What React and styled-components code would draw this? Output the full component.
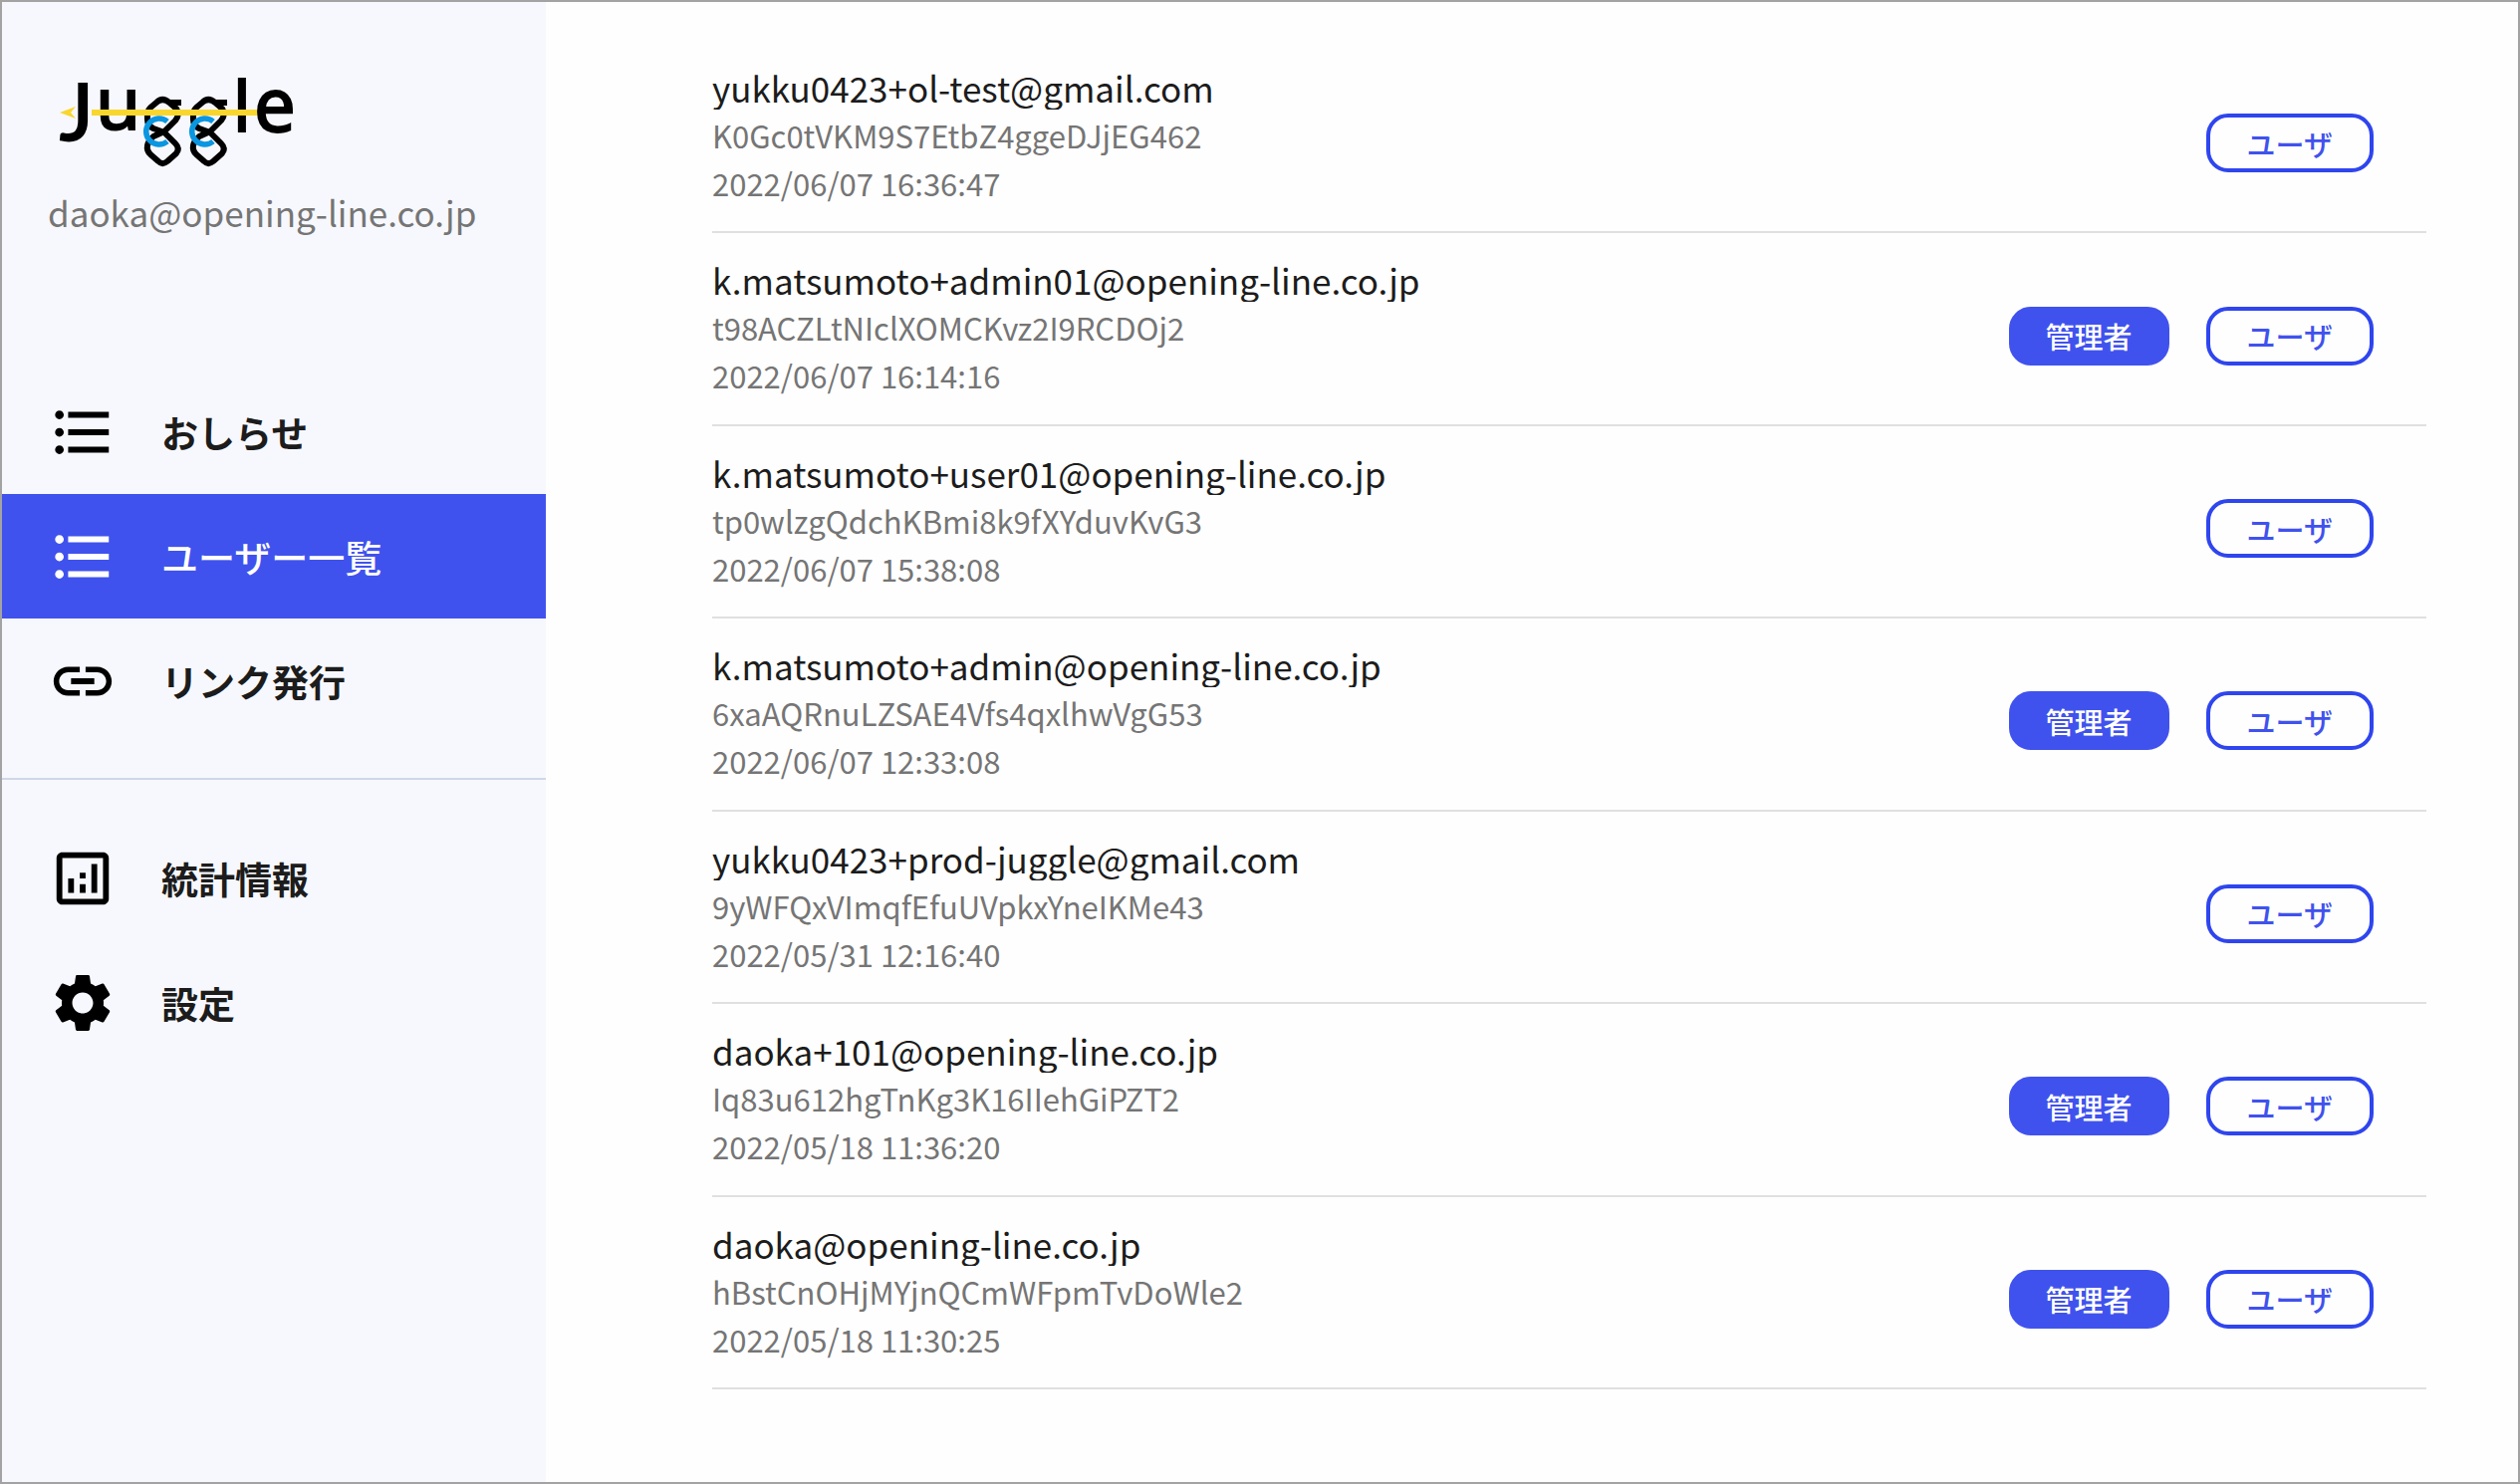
import React from "react";
import styled, { createGlobalStyle } from "styled-components";
import {
  MdFormatListBulleted,
  MdLink,
  MdOutlineAnalytics,
  MdSettings,
} from "react-icons/md";

const GlobalStyle = createGlobalStyle`
  *, *::before, *::after { box-sizing: border-box; }
  body {
    margin: 0;
    background: #fefefe;
    color: #1c1c1c;
    font-family: "Noto Sans CJK JP", "Noto Sans", sans-serif;
  }
`;

const Page = styled.div`
  display: flex;
  min-height: 100vh;
  border: 2px solid #a3a3a3;
`;

const Sidebar = styled.aside`
  flex: 0 0 546px;
  background: #f7f8fd;
`;

const Account = styled.header`
  height: 369px;
  padding: 73px 46px 0;
`;

const Logo = styled.svg`
  display: block;
  width: 252px;
  height: 96px;
  overflow: visible;
`;

const LogoLetter = styled.text`
  font-family: ${(p) => p.$face || "Noto Sans"}, "Open Sans", sans-serif;
  font-size: ${(p) => p.$size}px;
  fill: #000;
  stroke: #000;
  stroke-width: 2px;
`;

const AccountEmail = styled.p`
  margin: 16px 0 0;
  font-size: 35px;
  line-height: 52px;
  color: #757575;
`;

const NavList = styled.ul`
  margin: 0;
  padding: 0;
  list-style: none;
`;

const NavLink = styled.a`
  display: flex;
  align-items: center;
  gap: 44px;
  height: 125px;
  padding: 0 46px;
  font-size: 37px;
  font-weight: ${(p) => (p.$active ? 500 : 700)};
  text-decoration: none;
  color: ${(p) => (p.$active ? "#fff" : "#1c1c1c")};
  background: ${(p) => (p.$active ? "#4052ed" : "transparent")};

  svg {
    flex: none;
    width: 70px;
    height: 70px;
    color: ${(p) => (p.$active ? "#fff" : "#000")};
  }
`;

const Divider = styled.hr`
  height: 2px;
  margin: 35px 0 36px;
  border: 0;
  background: #d0d7e5;
`;

const Main = styled.main`
  flex: 1;
  display: flex;
  min-width: 0;
  padding: 39px 92px 93px 167px;
`;

const UserList = styled.ul`
  flex: 1;
  display: grid;
  grid-auto-rows: 1fr;
  min-width: 0;
  margin: 0;
  padding: 0;
  list-style: none;
`;

const UserRow = styled.li`
  display: flex;
  align-items: center;
  justify-content: space-between;
  padding: 24px 53px 10px 0;
  border-bottom: 2px solid #e0e0e0;
`;

const UserText = styled.div`
  align-self: flex-start;
  display: flex;
  flex-direction: column;
  min-width: 0;
`;

const UserEmail = styled.span`
  margin-bottom: 2px;
  overflow: hidden;
  font-size: 35px;
  line-height: 45px;
  white-space: nowrap;
  text-overflow: ellipsis;
`;

const UserMeta = styled.span`
  font-size: 31px;
  line-height: 48px;
  color: #757575;
`;

const Roles = styled.div`
  flex: none;
  display: flex;
  gap: 37px;
`;

const RoleButton = styled.button`
  height: 59px;
  padding: 0 ${(p) => (p.$filled ? 33 : 37)}px;
  border: 4px solid ${(p) => (p.$filled ? "#4052ed" : "#2f45ee")};
  border-radius: 22px;
  background: ${(p) => (p.$filled ? "#4052ed" : "transparent")};
  color: ${(p) => (p.$filled ? "#fff" : "#4052ed")};
  font-family: inherit;
  font-size: 29px;
  font-weight: 500;
  line-height: 48px;
  cursor: pointer;
`;

const primaryNav = [
  { label: "おしらせ", Icon: MdFormatListBulleted },
  { label: "ユーザー一覧", Icon: MdFormatListBulleted, active: true },
  { label: "リンク発行", Icon: MdLink },
];

const secondaryNav = [
  { label: "統計情報", Icon: MdOutlineAnalytics },
  { label: "設定", Icon: MdSettings },
];

const users = [
  { email: "yukku0423+ol-test@gmail.com", id: "K0Gc0tVKM9S7EtbZ4ggeDJjEG462", date: "2022/06/07 16:36:47" },
  { email: "k.matsumoto+admin01@opening-line.co.jp", id: "t98ACZLtNIclXOMCKvz2I9RCDOj2", date: "2022/06/07 16:14:16", admin: true },
  { email: "k.matsumoto+user01@opening-line.co.jp", id: "tp0wlzgQdchKBmi8k9fXYduvKvG3", date: "2022/06/07 15:38:08" },
  { email: "k.matsumoto+admin@opening-line.co.jp", id: "6xaAQRnuLZSAE4Vfs4qxlhwVgG53", date: "2022/06/07 12:33:08", admin: true },
  { email: "yukku0423+prod-juggle@gmail.com", id: "9yWFQxVImqfEfuUVpkxYneIKMe43", date: "2022/05/31 12:16:40" },
  { email: "daoka+101@opening-line.co.jp", id: "Iq83u612hgTnKg3K16IIehGiPZT2", date: "2022/05/18 11:36:20", admin: true },
  { email: "daoka@opening-line.co.jp", id: "hBstCnOHjMYjnQCmWFpmTvDoWle2", date: "2022/05/18 11:30:25", admin: true },
];

function Loops({ x }) {
  return (
    <g transform={`translate(${x} 0)`} fill="none" strokeLinejoin="round">
      <path
        d="M37 28 H25 Q18 22 12 28 L6 33 Q3 36 3 40 V45 Q3 51 9 54 L20 58 L31 69 Q36 74 32 79 L23 87 Q18 91 14 87 L6 80 Q2 76 3 71 Q4 66 9 62 L20 57 L31 46 Q36 40 32 34 L25 28"
        stroke="#000"
        strokeWidth="6"
      />
      <path d="M23 47 A13 13 0 1 0 23 67" stroke="#0a96e0" strokeWidth="5.500" />
    </g>
  );
}

function JuggleLogo() {
  return (
    <Logo viewBox="0 0 252 96" role="img" aria-label="Juggle">
      <LogoLetter x="48" y="55" $size="73">u</LogoLetter>
      <LogoLetter x="186" y="57" $size="69">l</LogoLetter>
      <path d="M12 38 L28 32 L23 38 L28 44 Z" fill="#f9d62e" />
      <Loops x={97} />
      <Loops x={143} />
      <path d="M44 38 H212" stroke="#f9d62e" strokeWidth="6" />
      <LogoLetter x="12" y="66" $size="80" $face="Lato">J</LogoLetter>
      <LogoLetter x="207" y="57" $size="74">e</LogoLetter>
    </Logo>
  );
}

function Nav({ items, label }) {
  return (
    <nav aria-label={label}>
      <NavList>
        {items.map(({ label: text, Icon, active }) => (
          <li key={text}>
            <NavLink href="#" $active={active} aria-current={active ? "page" : undefined}>
              <Icon aria-hidden="true" />
              {text}
            </NavLink>
          </li>
        ))}
      </NavList>
    </nav>
  );
}

export default function App() {
  return (
    <>
      <GlobalStyle />
      <Page>
        <Sidebar>
          <Account>
            <JuggleLogo />
            <AccountEmail>daoka@opening-line.co.jp</AccountEmail>
          </Account>
          <Nav items={primaryNav} />
          <Divider />
          <Nav items={secondaryNav} />
        </Sidebar>
        <Main>
          <UserList>
            {users.map((user) => (
              <UserRow key={user.id}>
                <UserText>
                  <UserEmail>{user.email}</UserEmail>
                  <UserMeta>{user.id}</UserMeta>
                  <UserMeta>{user.date}</UserMeta>
                </UserText>
                <Roles>
                  {user.admin && <RoleButton type="button" $filled>管理者</RoleButton>}
                  <RoleButton type="button">ユーザ</RoleButton>
                </Roles>
              </UserRow>
            ))}
          </UserList>
        </Main>
      </Page>
    </>
  );
}
